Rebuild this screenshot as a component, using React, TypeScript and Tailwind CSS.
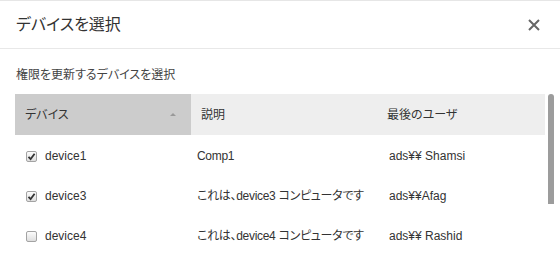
import React from "react"

type Device = { name: string; desc: string; user: string; checked: boolean }

const DEVICES: Device[] = [
  { name: "device1", desc: "Comp1", user: "ads¥¥ Shamsi", checked: true },
  { name: "device3", desc: "これは、device3 コンピュータです", user: "ads¥¥Afag", checked: true },
  { name: "device4", desc: "これは、device4 コンピュータです", user: "ads¥¥ Rashid", checked: false },
]

function Check({ checked }: { checked: boolean }) {
  return (
    <span className="flex h-[11px] w-[11px] shrink-0 items-center justify-center rounded-[2px] border border-[#a3a3a3] bg-gradient-to-b from-[#fcfcfc] to-[#dedede]">
      {checked && (
        <svg width="9" height="9" viewBox="0 0 9 9">
          <path d="M1.5 4.8 L3.6 7 L7.6 1.8" fill="none" stroke="#333" strokeWidth="1.8" />
        </svg>
      )}
    </span>
  )
}

export default function App() {
  return (
    <div
      className="h-[255px] w-[560px] overflow-hidden border-t border-[#e6e6e6] bg-white text-[#333] [font-feature-settings:'palt']"
      style={{ fontFamily: '"Liberation Sans", "Noto Sans CJK JP", sans-serif' }}
    >
      {/* dialog title */}
      <div className="flex h-[48px] items-center justify-between border-b border-[#e8e8e8] pl-4 pr-[20px]">
        <h1 className="text-[16px] font-normal text-[#333]">デバイスを選択</h1>
        <svg width="12" height="12" viewBox="0 0 12 12">
          <path d="M1 1 L11 11 M11 1 L1 11" stroke="#666" strokeWidth="2" />
        </svg>
      </div>

      <p className="pl-4 pt-[18px] text-[12px] leading-[16px] text-[#444]">権限を更新するデバイスを選択</p>

      {/* device table + scrollbar */}
      <div className="mt-[11px] flex gap-[3px] pl-[15px]">
        <div className="w-[530px] text-[12px]">
          <div className="flex h-[41px] items-center bg-[#eeeeee]">
            <div className="flex h-full w-[176px] items-center justify-between bg-[#cccccc] pl-[10px] pr-[15px]">
              <span>デバイス</span>
              <span className="h-0 w-0 border-x-[3px] border-b-[3px] border-x-transparent border-b-[#999]" />
            </div>
            <div className="w-[188px] pl-[10px]">説明</div>
            <div className="pl-[8px]">最後のユーザ</div>
          </div>
          {DEVICES.map((d) => (
            <div key={d.name} className="flex h-[40px] items-center pt-[2px]">
              <div className="flex w-[176px] items-center gap-[8px] pl-[11px]">
                <Check checked={d.checked} />
                <span>{d.name}</span>
              </div>
              <div className="w-[188px] whitespace-nowrap pl-[6px] tracking-[-0.3px]">{d.desc}</div>
              <div className="whitespace-nowrap pl-[10px]">{d.user}</div>
            </div>
          ))}
        </div>
        <div className="h-[110px] w-[6px] rounded-t-[3px] bg-[#9c9c9c]" />
      </div>
    </div>
  )
}
